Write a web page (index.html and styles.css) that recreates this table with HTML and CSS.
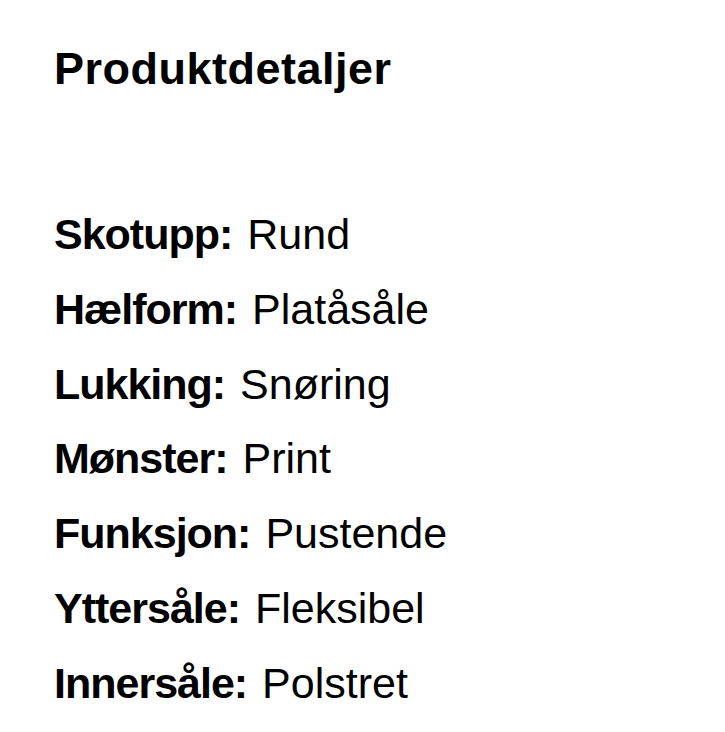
FILE: index.html
```html
<!DOCTYPE html>
<html lang="no">
<head>
<meta charset="utf-8">
<link rel="stylesheet" href="styles.css">
</head>
<body>
<section class="details">
  <h2 class="title">Produktdetaljer</h2>
  <ul class="list">
    <li><span class="label">Skotupp:</span> Rund</li>
    <li><span class="label">Hælform:</span> Platåsåle</li>
    <li><span class="label">Lukking:</span> Snøring</li>
    <li><span class="label">Mønster:</span> Print</li>
    <li><span class="label">Funksjon:</span> Pustende</li>
    <li><span class="label">Yttersåle:</span> Fleksibel</li>
    <li><span class="label">Innersåle:</span> Polstret</li>
  </ul>
</section>
</body>
</html>
```
FILE: styles.css
```css
html, body {
  margin: 0;
  padding: 0;
  background: #fff;
}
body {
  font-family: "Liberation Sans", Arial, sans-serif;
  color: #000;
}
.details {
  padding: 43px 54px 0;
}
.title {
  margin: 0;
  font-size: 45px;
  font-weight: 700;
  line-height: 52px;
  letter-spacing: 0.5px;
}
.list {
  list-style: none;
  margin: 102px 0 0;
  padding: 0;
  font-size: 43px;
  line-height: 74.8px;
}
.label {
  font-weight: 700;
  letter-spacing: -1px;
  margin-right: 3px;
}
```
